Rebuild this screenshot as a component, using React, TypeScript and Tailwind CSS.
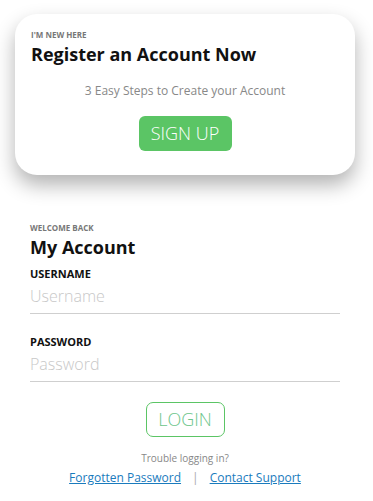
import React from 'react';

const font = { fontFamily: '"Open Sans", "Noto Sans", Arial, sans-serif' };

function Field({ label, placeholder, type = 'text' }: { label: string; placeholder: string; type?: string }) {
  return (
    <label className="block">
      <span className="block text-[11px] font-bold leading-[14px] text-[#111]">{label}</span>
      <input
        type={type}
        placeholder={placeholder}
        className="mt-[4px] block w-full border-b border-[#cfcfcf] bg-transparent pb-[6px] text-[16px] font-light leading-[22px] text-[#333] outline-none placeholder:text-[#c8c8c8]"
      />
    </label>
  );
}

export default function App() {
  return (
    <div className="min-h-[501px] w-full bg-white pt-[14px]" style={font}>
      <section className="ml-[15px] mr-[18px] rounded-[22px] bg-white px-4 pb-[24px] pt-[16px] shadow-[0_10px_20px_rgba(0,0,0,0.3)]">
        <p className="text-[8px] font-bold uppercase leading-[10px] text-[#777]">I'm new here</p>
        <h2 className="mt-[2px] text-[18px] font-bold leading-[24px] text-[#111]">Register an Account Now</h2>
        <p className="mt-[16px] text-center text-[12px] leading-[18px] text-[#888]">3 Easy Steps to Create your Account</p>
        <div className="mt-[16px] flex justify-center">
          <button className="h-[35px] w-[93px] rounded-[6px] bg-[#5bc565] text-[18px] font-light text-white">SIGN UP</button>
        </div>
      </section>

      <section className="mt-[48px] pl-[30px] pr-[33px]">
        <p className="text-[8px] font-bold uppercase leading-[10px] text-[#777]">Welcome back</p>
        <h2 className="mt-[2px] text-[18px] font-bold leading-[24px] text-[#111]">My Account</h2>
        <div className="mt-[8px] space-y-[21px]">
          <Field label="USERNAME" placeholder="Username" />
          <Field label="PASSWORD" placeholder="Password" type="password" />
        </div>
        <div className="mt-[20px] flex justify-center">
          <button className="h-[35px] w-[79px] rounded-[7px] border border-[#5bc565] text-[18px] font-light text-[#6cc58a]">LOGIN</button>
        </div>
        <p className="mt-[14px] text-center text-[10px] leading-[14px] text-[#888]">Trouble logging in?</p>
        <div className="mt-[5px] flex items-center justify-center gap-[11px] text-[12px] leading-[16px]">
          <a href="#" className="text-[#1a7bbd] underline">Forgotten Password</a>
          <span className="text-[#aaa]">|</span>
          <a href="#" className="text-[#1a7bbd] underline">Contact Support</a>
        </div>
      </section>
    </div>
  );
}
